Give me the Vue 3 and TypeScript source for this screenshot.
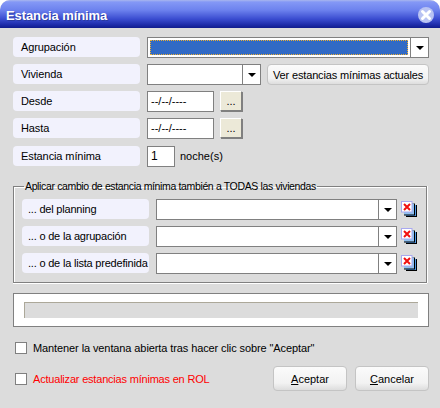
<script setup lang="ts">
const groupRows: string[] = ['... del planning', '... o de la agrupación', '... o de la lista predefinida']
</script>

<template>
  <div class="win">
    <header class="title">
      <span class="title-text">Estancia mínima</span>
      <svg class="close" width="18" height="18" viewBox="0 0 18 18">
        <circle cx="9" cy="9" r="8" fill="#b9c3f3" />
        <path d="M5.5 5.5 12.5 12.5M12.5 5.5 5.5 12.5" stroke="#fff" stroke-width="3" stroke-linecap="round" />
      </svg>
    </header>
    <main class="body">
      <div class="row">
        <div class="label">Agrupación</div>
        <div class="combo combo-full">
          <div class="field"><div class="selected"></div></div>
          <div class="arrow"><i></i></div>
        </div>
      </div>
      <div class="row">
        <div class="label">Vivienda</div>
        <div class="combo combo-small">
          <div class="field"></div>
          <div class="arrow"><i></i></div>
        </div>
        <button class="btn btn-ver">Ver estancias mínimas actuales</button>
      </div>
      <div class="row">
        <div class="label">Desde</div>
        <div class="input date">--/--/----</div>
        <button class="dots">...</button>
      </div>
      <div class="row">
        <div class="label">Hasta</div>
        <div class="input date">--/--/----</div>
        <button class="dots">...</button>
      </div>
      <div class="row row-stay">
        <div class="label">Estancia mínima</div>
        <div class="input num">1</div>
        <span class="unit">noche(s)</span>
      </div>

      <fieldset class="group">
        <legend>Aplicar cambio de estancia mínima también a TODAS las viviendas</legend>
        <div v-for="r in groupRows" :key="r" class="row">
          <div class="label">{{ r }}</div>
          <div class="combo combo-group">
            <div class="field"></div>
            <div class="arrow"><i></i></div>
          </div>
          <svg class="stack" width="16" height="16" viewBox="0 0 16 16">
            <rect x="5" y="4" width="11" height="12" fill="#000" />
            <rect x="5" y="4" width="10" height="11" fill="#4f9ae8" />
            <rect x="3" y="2.5" width="11" height="12" fill="#000" />
            <rect x="3" y="2.5" width="10" height="11" fill="#8fc0f0" />
            <rect x="0.5" y="0.5" width="10.5" height="10.5" fill="#fff" stroke="#a9a9f0" />
            <path d="M3 3 9 9M9 3 3 9" stroke="#f01010" stroke-width="2" />
          </svg>
        </div>
      </fieldset>

      <div class="progress-box"><div class="progress"></div></div>

      <label class="check check-first">
        <span class="box"></span>
        <span>Mantener la ventana abierta tras hacer clic sobre "Aceptar"</span>
      </label>

      <footer class="foot">
        <label class="check red">
          <span class="box"></span>
          <span>Actualizar estancias mínimas en ROL</span>
        </label>
        <div class="actions">
          <button class="btn btn-main"><u>A</u>ceptar</button>
          <button class="btn btn-main"><u>C</u>ancelar</button>
        </div>
      </footer>
    </main>
  </div>
</template>

<style>
html, body { margin: 0; background: #fff; }
</style>

<style scoped>
.win {
  width: 440px;
  height: 408px;
  box-sizing: border-box;
  background: #dcdcdc;
  border-radius: 10px 10px 0 0;
  overflow: hidden;
  font-family: "Liberation Sans", Arial, sans-serif;
  font-size: 11px;
  color: #000;
  display: flex;
  flex-direction: column;
}
.title {
  height: 28px;
  flex: none;
  box-sizing: border-box;
  display: flex;
  align-items: center;
  justify-content: space-between;
  padding: 2px 5px 0 6px;
  background: linear-gradient(#a9b6ee 0, #8498f6 2px, #6d82ee 10px, #3a4cd0 19px, #1c2aa8 25px, #101c8c 28px);
}
.title-text {
  color: #fff;
  font-weight: 700;
  font-size: 13px;
  letter-spacing: -0.1px;
  text-shadow: 1px 1px 0 #2a3aa0;
}
.close { display: block; }
.body { padding: 9px 11px 0 13px; }
.row {
  display: flex;
  align-items: flex-start;
  height: 21px;
  margin-bottom: 6px;
}
.row-stay { margin-top: 7px; margin-bottom: 12px; }
.label {
  width: 127px;
  height: 20px;
  box-sizing: border-box;
  flex: none;
  background: #f2f2fd;
  border-radius: 4px;
  padding-left: 8px;
  line-height: 20px;
  margin-right: 7px;
  white-space: nowrap;
  letter-spacing: -0.1px;
}
.group .label { padding-left: 6px; letter-spacing: -0.2px; }
.combo {
  height: 21px;
  box-sizing: border-box;
  display: flex;
  background: #fff;
  border: 1px solid #808080;
}
.combo-full { width: 285px; }
.combo-small { width: 115px; }
.combo-group { width: 241px; }
.field { flex: 1; padding: 2px; box-sizing: border-box; min-width: 0; }
.selected {
  height: 15px;
  background: #316ac5;
  outline: 1px dotted #f0b030;
  outline-offset: -1px;
}
.arrow {
  width: 17px;
  flex: none;
  border-left: 1px solid #808080;
  display: flex;
  align-items: center;
  justify-content: center;
}
.arrow i {
  width: 0;
  height: 0;
  border-left: 4px solid transparent;
  border-right: 4px solid transparent;
  border-top: 4px solid #000;
}
.btn {
  font: inherit;
  color: #000;
  border: 1px solid #c4c4c4;
  border-radius: 4px;
  background: linear-gradient(#fbfbfb, #f2f2f2 70%, #dddddd);
  padding: 0;
  white-space: nowrap;
}
.btn-ver { width: 163px; height: 21px; margin-left: 6px; letter-spacing: -0.15px; }
.input {
  height: 21px;
  box-sizing: border-box;
  border: 1px solid #808080;
  background: #fff;
  line-height: 19px;
  padding-left: 3px;
  flex: none;
}
.date { width: 67px; }
.num { width: 28px; font-size: 12px; }
.unit { margin-left: 5px; line-height: 21px; }
.dots {
  width: 22px;
  height: 20px;
  margin-left: 6px;
  padding: 0;
  font: inherit;
  color: #000;
  background: #ece9d8;
  border: 1px solid;
  border-color: #fff #808080 #808080 #fff;
  box-shadow: 1px 1px 0 #808080;
}
.group {
  width: 414px;
  height: 104px;
  box-sizing: border-box;
  margin: 0;
  padding: 6px 0 0 8px;
  border: 1px solid #808080;
  box-shadow: inset 1px 1px 0 #fff, 0 1px 0 #fff, 1px 0 0 #fff;
}
.group legend {
  padding: 0 1px;
  margin: 4px 0 0 2px;
  line-height: 14px;
  font-size: 10.5px;
  letter-spacing: -0.36px;
}
.stack { margin-left: 4px; margin-top: 2px; flex: none; }
.progress-box {
  width: 416px;
  height: 34px;
  box-sizing: border-box;
  margin-top: 10px;
  background: #fff;
  border: 1px solid #808080;
  padding: 8px 10px 0;
}
.progress {
  height: 16px;
  background: #dcdcdc;
  border-top: 1px solid #aca899;
  border-left: 1px solid #aca899;
  box-sizing: border-box;
}
.check {
  display: flex;
  align-items: center;
  gap: 6px;
  white-space: nowrap;
  margin-left: 2px;
  letter-spacing: -0.1px;
}
.check-first { margin-top: 15px; }
.box {
  width: 10px;
  height: 10px;
  flex: none;
  background: #fff;
  border: 1px solid #808080;
}
.red { color: #ff0000; letter-spacing: -0.2px; }
.foot {
  display: flex;
  align-items: center;
  justify-content: space-between;
  margin-top: 12px;
  width: 416px;
}
.actions { display: flex; gap: 8px; }
.btn-main { width: 74px; height: 25px; }
</style>
